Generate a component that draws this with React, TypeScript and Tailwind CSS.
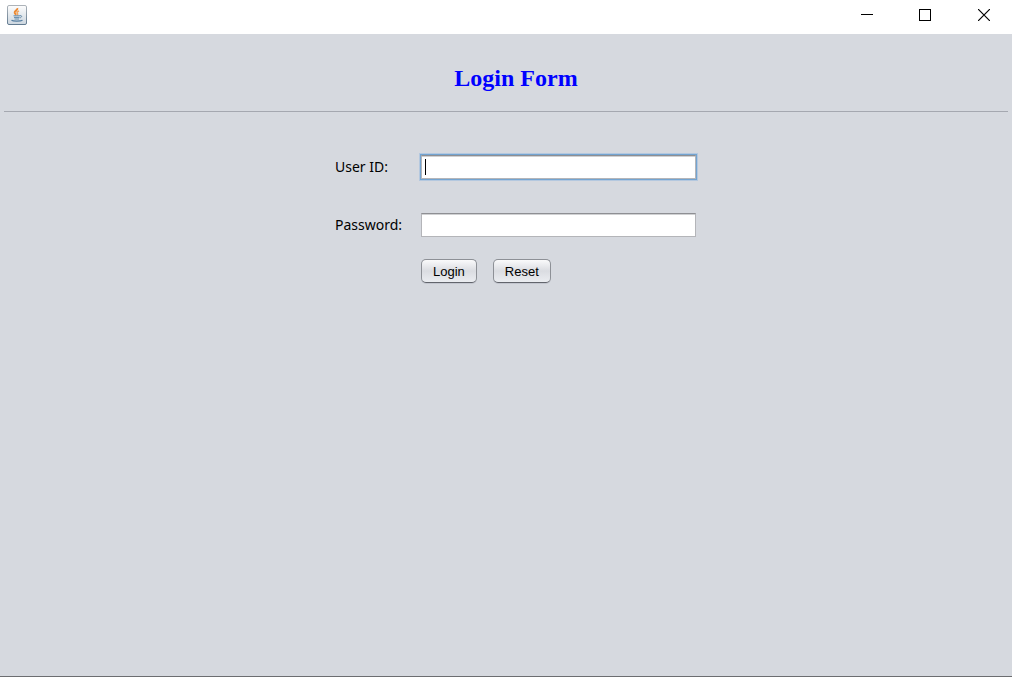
import React from "react";

const fieldClass =
  "peer block h-6 w-full border border-[#b4b5b9] border-t-[#8e8f93] bg-white px-1 font-['Noto_Sans',sans-serif] text-sm text-black caret-transparent shadow-[inset_0_1px_0_#d0d1d3] outline-none focus:shadow-[inset_0_1px_0_#d0d1d3,0_0_0_1px_#73a4d1,0_0_0_2px_#b4c8df]";

const buttonClass =
  "h-6 rounded-[5px] border border-[#8d9096] border-b-[#62656c] bg-linear-to-b from-[#fafafb] via-[#dadce1] to-[#ebedf1] px-[11px] pt-px font-['Liberation_Sans',Arial,sans-serif] text-[13px] leading-[22px] text-black shadow-[0_1px_0_#c3c6cf]";

function Field({ id, label, type, autoFocus }: { id: string; label: string; type: string; autoFocus?: boolean }) {
  return (
    <div className="flex items-center">
      <label htmlFor={id} className="w-[86px] shrink-0 font-['Noto_Sans',sans-serif] text-sm leading-6 text-black">
        {label}
      </label>
      <div className="relative min-w-0 flex-1">
        <input id={id} type={type} placeholder=" " autoFocus={autoFocus} className={fieldClass} />
        <span
          aria-hidden="true"
          className="pointer-events-none absolute top-1 left-1 hidden h-4 w-px bg-black peer-focus:peer-placeholder-shown:block"
        />
      </div>
    </div>
  );
}

function JavaIcon() {
  return (
    <svg width="20" height="20" viewBox="0 0 20 20" aria-hidden="true">
      <defs>
        <linearGradient id="tile" x1="0" y1="0" x2="0" y2="1">
          <stop offset="0" stopColor="#fdfdfd" />
          <stop offset="1" stopColor="#ccd6df" />
        </linearGradient>
        <linearGradient id="edge" x1="0" y1="0" x2="0" y2="1">
          <stop offset="0" stopColor="#adb3b9" />
          <stop offset="1" stopColor="#627b91" />
        </linearGradient>
      </defs>
      <rect x="0.5" y="0.5" width="19" height="19" rx="1.5" fill="url(#tile)" stroke="url(#edge)" />
      <path d="M10.3 3.200c.7 2-3 2.700-2.600 4.600.2.800 1 1.400 1.600 2" fill="none" stroke="#ed8a32" strokeWidth="2" />
      <path d="M12 6c-2 .8-2.400 1.600-1.500 2.500.5.600.2 1.100-.3 1.600" fill="none" stroke="#f0a55f" strokeWidth="1.500" />
      <path d="M6.500 10.800h6.500M7 12.400h5.500M7.500 14h4.500M13 10.700c2.300-.4 2.200 1.500-.2 2.300" fill="none" stroke="#6389a8" strokeWidth="1" />
      <path d="M4.500 15.300c1.500 1.200 9 1.200 11 0" fill="none" stroke="#547da0" strokeWidth="1.200" />
    </svg>
  );
}

export default function App() {
  return (
    <div className="flex min-h-screen flex-col border-b border-[#6c6d70] bg-[#d6d9df]">
      <header className="flex h-[34px] items-start justify-between bg-white">
        <div className="pt-[5px] pl-[7px]">
          <JavaIcon />
        </div>
        <div className="flex text-black">
          <button type="button" aria-label="Minimize" className="flex h-[30px] w-[58px] items-center justify-center">
            <svg width="12" height="12" shapeRendering="crispEdges"><path d="M0 5.500h12" stroke="currentColor" /></svg>
          </button>
          <button type="button" aria-label="Maximize" className="flex h-[30px] w-[58px] items-center justify-center">
            <svg width="12" height="12" shapeRendering="crispEdges"><rect x="0.500" y="0.500" width="11" height="11" fill="none" stroke="currentColor" /></svg>
          </button>
          <button type="button" aria-label="Close" className="flex h-[30px] w-[58px] items-center justify-center pl-0.5">
            <svg width="12" height="12"><path d="M0 0l12 12M12 0L0 12" stroke="currentColor" strokeWidth="1.200" /></svg>
          </button>
        </div>
      </header>
      <main className="flex-1 px-1">
        <h1 className="border-b border-[#a5a8b0] pt-7 pb-[17px] pl-5 text-center font-['Liberation_Serif','Times_New_Roman',serif] text-2xl leading-8 font-bold text-[#0000ff]">
          Login Form
        </h1>
        <div className="pl-[19px]">
          <form className="mx-auto max-w-[361px] pt-[43px]" onSubmit={(e) => e.preventDefault()}>
            <div className="flex flex-col gap-[34px]">
              <Field id="user-id" label="User ID:" type="text" autoFocus />
              <Field id="password" label="Password:" type="password" />
            </div>
            <div className="mt-[22px] flex gap-4 pl-[86px]">
              <button type="submit" className={buttonClass}>Login</button>
              <button type="reset" className={buttonClass}>Reset</button>
            </div>
          </form>
        </div>
      </main>
    </div>
  );
}
